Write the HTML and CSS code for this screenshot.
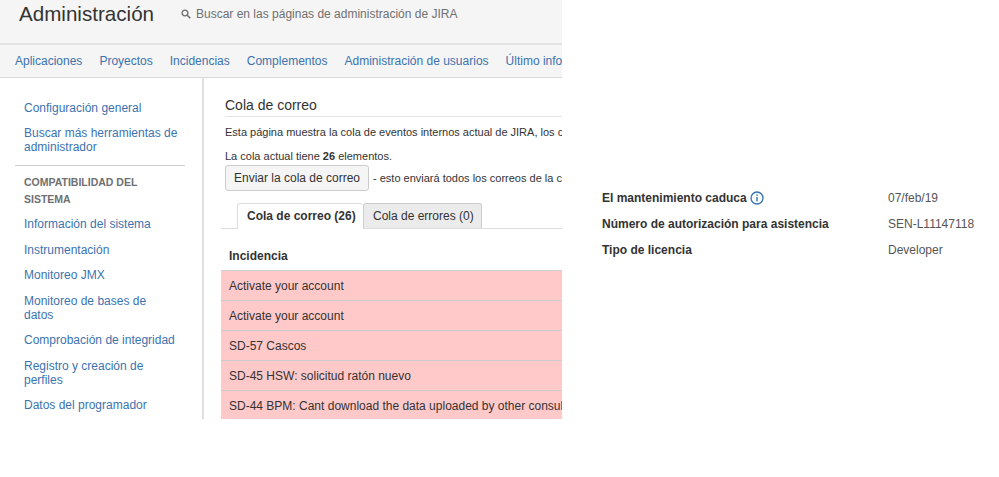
FILE: index.html
```html
<!DOCTYPE html>
<html lang="es">
<head>
<meta charset="utf-8">
<title>Administración</title>
<link rel="stylesheet" href="styles.css">
</head>
<body>
<div class="page">
  <section class="admin">
    <header class="top">
      <h1 class="brand">Administración</h1>
      <div class="search">
        <svg class="search-icon" viewBox="0 0 10 10" width="10" height="10"><circle cx="4" cy="4" r="2.9" fill="none" stroke="#707070" stroke-width="1.4"/><path d="M6.2 6.2L9.3 9.3" stroke="#707070" stroke-width="1.6"/></svg>
        <span>Buscar en las páginas de administración de JIRA</span>
      </div>
    </header>
    <nav class="nav">
      <a>Aplicaciones</a><a>Proyectos</a><a>Incidencias</a><a>Complementos</a><a>Administración de usuarios</a><a>Último informe de actualización</a>
    </nav>
    <div class="body">
      <aside class="side">
        <ul class="menu first">
          <li>Configuración general</li>
          <li>Buscar más herramientas de administrador</li>
        </ul>
        <h2 class="side-title">COMPATIBILIDAD DEL SISTEMA</h2>
        <ul class="menu">
          <li>Información del sistema</li>
          <li>Instrumentación</li>
          <li>Monitoreo JMX</li>
          <li>Monitoreo de bases de datos</li>
          <li>Comprobación de integridad</li>
          <li>Registro y creación de perfiles</li>
          <li>Datos del programador</li>
        </ul>
      </aside>
      <main class="main">
        <h2 class="heading">Cola de correo</h2>
        <p class="intro">Esta página muestra la cola de eventos internos actual de JIRA, los correos pendientes de envío</p>
        <p class="count">La cola actual tiene <b>26</b> elementos.</p>
        <div class="action"><button class="btn">Enviar la cola de correo</button><span>- esto enviará todos los correos de la cola de inmediato</span></div>
        <div class="tabs">
          <span class="tab active">Cola de correo (26)</span><span class="tab">Cola de errores (0)</span>
        </div>
        <div class="th">Incidencia</div>
        <div class="row">Activate your account</div>
        <div class="row">Activate your account</div>
        <div class="row">SD-57 Cascos</div>
        <div class="row">SD-45 HSW: solicitud ratón nuevo</div>
        <div class="row">SD-44 BPM: Cant download the data uploaded by other consultants</div>
      </main>
    </div>
  </section>
  <section class="license">
    <div class="lic-row"><span class="lic-key">El mantenimiento caduca<svg class="info" viewBox="0 0 14 14" width="14" height="14"><circle cx="7" cy="7" r="6" fill="none" stroke="#2f74b5" stroke-width="1.3"/><rect x="6.3" y="6" width="1.4" height="4.4" fill="#2f74b5"/><rect x="6.3" y="3.4" width="1.4" height="1.5" fill="#2f74b5"/></svg></span><span class="lic-val">07/feb/19</span></div>
    <div class="lic-row"><span class="lic-key">Número de autorización para asistencia</span><span class="lic-val">SEN-L11147118</span></div>
    <div class="lic-row"><span class="lic-key">Tipo de licencia</span><span class="lic-val">Developer</span></div>
  </section>
</div>
</body>
</html>
```
FILE: styles.css
```css
* { box-sizing: border-box; }
html, body { margin: 0; padding: 0; background: #fff; }
body { font-family: "Liberation Sans", Arial, sans-serif; font-size: 12px; color: #333; overflow: hidden; }
.page { display: flex; width: 999px; height: 477px; }

.admin { width: 562px; height: 419px; overflow: hidden; flex: none; }
.top { height: 45px; background: #f5f5f5; border-bottom: 2px solid #e2e2e2; display: flex; align-items: flex-start; padding-left: 19px; }
.brand { margin: 2px 0 0; font-size: 20.6px; font-weight: 400; line-height: 24px; color: #333; width: 162px; flex: none; }
.search { display: flex; align-items: center; gap: 5px; height: 14px; margin-top: 7px; color: #707070; font-size: 12px; white-space: nowrap; }
.search-icon { flex: none; }

.nav { height: 33px; background: #f5f5f5; border-bottom: 1px solid #d9d9d9; display: flex; gap: 17px; padding: 9px 0 0 15px; white-space: nowrap; line-height: 14px; }
.nav a { color: #3b73af; }

.body { display: flex; height: 341px; }
.side { width: 204px; flex: none; border-right: 2px solid #e0e0e0; padding: 23px 17px 0 15px; }
.menu { list-style: none; margin: 0; padding: 0 7px 0 9px; color: #3b73af; line-height: 14px; }
.menu li { margin-bottom: 11.5px; }
.menu.first { border-bottom: 1px solid #ccc; padding-bottom: 0; }
.menu.first li:first-child { margin-bottom: 11px; }
.menu.first li:last-child { margin-bottom: 11px; }
.side-title { margin: 8px 0 9px 9px; font-size: 10.5px; font-weight: 700; line-height: 17px; color: #707070; }

.main { flex: 1; min-width: 0; padding: 19px 0 0 17px; overflow: hidden; }
.heading { margin: 0 0 0 4px; padding-bottom: 3px; font-size: 14px; font-weight: 400; line-height: 16px; color: #333; border-bottom: 1px solid #e4e4e4; }
.intro, .count { margin: 0 0 0 4px; font-size: 11px; line-height: 14px; white-space: nowrap; color: #333; }
.intro { margin-top: 8px; }
.count { margin-top: 10px; }
.action { display: flex; align-items: center; gap: 4px; margin: 2px 0 0 4px; white-space: nowrap; font-size: 11px; }
.btn { width: 144px; height: 26px; padding: 0; flex: none; background: #f5f5f5; border: 1px solid #ccc; border-radius: 3px; font: 12px "Liberation Sans", Arial, sans-serif; color: #333; }
.tabs { display: flex; align-items: flex-end; height: 26px; margin-top: 12px; padding-left: 16px; border-bottom: 1px solid #ddd; }
.tab { height: 25px; width: 119px; padding: 5px 0 0 9px; background: #ebebeb; border: 1px solid #ccc; border-bottom: 0; border-radius: 3px 3px 0 0; color: #333; line-height: 14px; white-space: nowrap; }
.tab.active { height: 26px; width: 126px; margin-bottom: -1px; background: #fff; border-color: #ddd; border-right: 0; font-weight: 700; }
.th { height: 42px; padding: 20px 0 0 8px; border-bottom: 1px solid #ccc; font-weight: 700; line-height: 14px; color: #333; }
.row { height: 30px; padding: 8px 0 0 8px; background: #ffc9c9; border-bottom: 1px solid #ccc; line-height: 14px; white-space: nowrap; color: #333; }

.license { flex: 1; padding: 191px 0 0 40px; }
.lic-row { display: flex; height: 26px; line-height: 14px; }
.lic-key { width: 286px; flex: none; font-weight: 700; color: #333; display: flex; align-items: flex-start; gap: 3px; white-space: pre; }
.lic-val { color: #555; white-space: nowrap; }
.info { flex: none; }
```
